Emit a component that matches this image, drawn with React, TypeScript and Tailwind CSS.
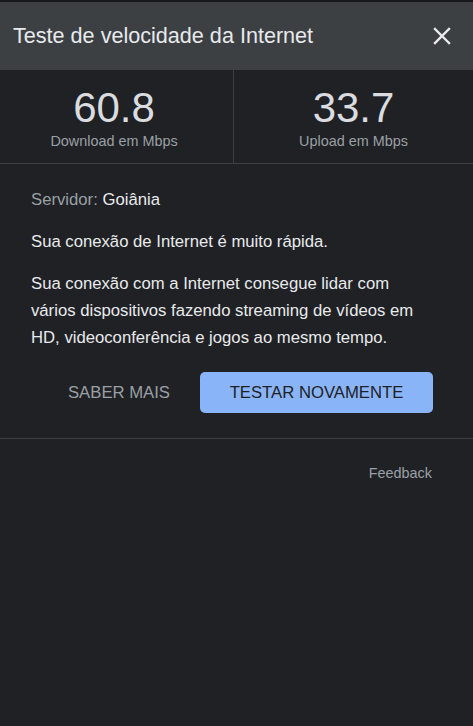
import React from "react";

export default function App() {
  return (
    <div
      className="w-[473px] h-[726px] bg-[#202124] flex flex-col overflow-hidden"
      style={{ fontFamily: '"Liberation Sans", Arial, sans-serif' }}
    >
      <div className="h-[2px] bg-[#17181a] shrink-0" />
      <div className="h-[68px] shrink-0 bg-[#3c4043] flex items-center justify-between pl-[13px] pr-[22px]">
        <span className="text-[21.6px] text-[#e8eaed] leading-none">Teste de velocidade da Internet</span>
        <svg width="18" height="18" viewBox="0 0 18 18" className="block">
          <path d="M2 2 L16 16 M16 2 L2 16" stroke="#e8eaed" strokeWidth="2.4" strokeLinecap="square" />
        </svg>
      </div>
      <div className="h-[94px] shrink-0 grid grid-cols-[234px_1fr] border-b border-[#3c4043]">
        <div className="border-r border-[#3c4043] flex flex-col items-center pt-[14px] pr-[5px]">
          <span className="text-[42px] leading-[48px] text-[#dadce0]">60.8</span>
          <span className="text-[14.4px] leading-[18px] text-[#9aa0a6]">Download em Mbps</span>
        </div>
        <div className="flex flex-col items-center pt-[14px]">
          <span className="text-[42px] leading-[48px] text-[#dadce0]">33.7</span>
          <span className="text-[14.4px] leading-[18px] text-[#9aa0a6]">Upload em Mbps</span>
        </div>
      </div>
      <div className="px-[31px] pt-[24px] flex flex-col text-[16.7px] text-[#e8eaed]">
        <div className="leading-[24px]">
          <span className="text-[#9aa0a6]">Servidor: </span>
          <span>Goiânia</span>
        </div>
        <p className="leading-[24px] mt-[18px]">Sua conexão de Internet é muito rápida.</p>
        <p className="leading-[27px] mt-[16px] w-[402px]">
          Sua conexão com a Internet consegue lidar com vários dispositivos fazendo streaming de vídeos em HD, videoconferência e jogos ao mesmo tempo.
        </p>
        <div className="flex justify-end items-center gap-[30px] mt-[21px] w-[402px]">
          <button className="text-[16.7px] text-[#9aa0a6] uppercase px-[0px] h-[41px]">SABER MAIS</button>
          <button className="w-[233px] h-[41px] rounded-[5px] bg-[#8ab4f8] text-[#202124] text-[16.7px]">
            TESTAR NOVAMENTE
          </button>
        </div>
      </div>
      <div className="mt-[25px] border-t border-[#3c4043]" />
      <div className="flex justify-end pr-[41px] pt-[25px]">
        <span className="text-[14.4px] text-[#9aa0a6] leading-[18px]">Feedback</span>
      </div>
    </div>
  );
}
